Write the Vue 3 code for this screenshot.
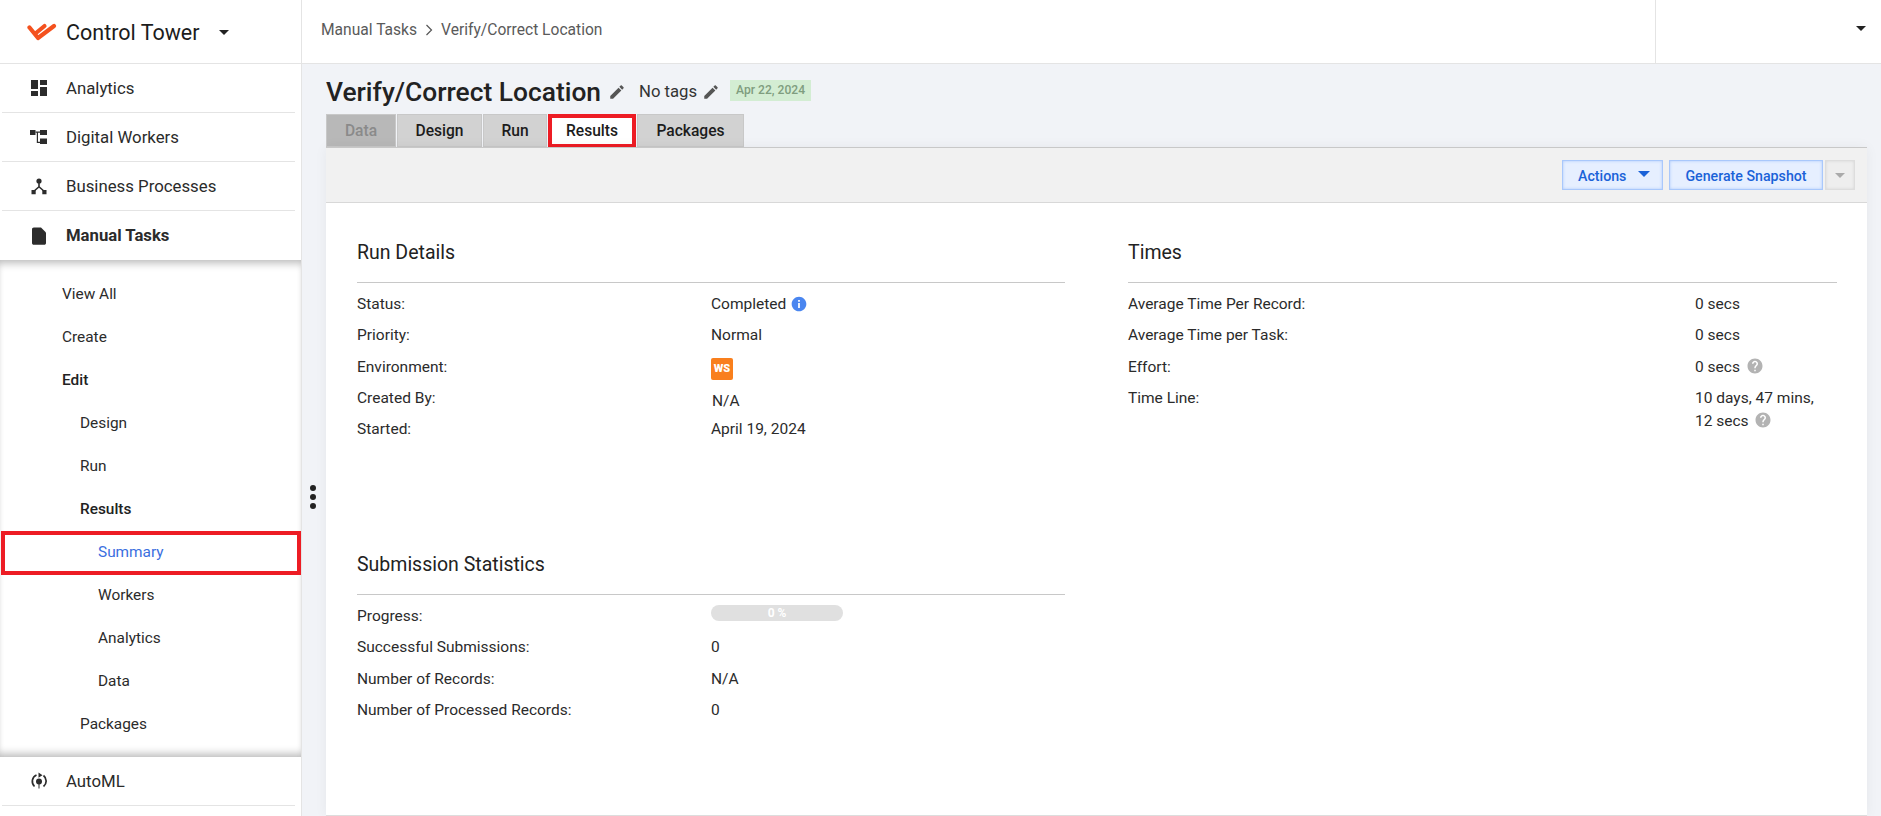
<script setup>
const navTop = [
  { label: 'Analytics', icon: 'dash' },
  { label: 'Digital Workers', icon: 'tree' },
  { label: 'Business Processes', icon: 'hub' },
]
const subItems = [
  { label: 'View All', level: 0 },
  { label: 'Create', level: 0 },
  { label: 'Edit', level: 0, bold: true },
  { label: 'Design', level: 1 },
  { label: 'Run', level: 1 },
  { label: 'Results', level: 1, bold: true },
  { label: 'Summary', level: 2, active: true },
  { label: 'Workers', level: 2 },
  { label: 'Analytics', level: 2 },
  { label: 'Data', level: 2 },
  { label: 'Packages', level: 1 },
]
const tabs = [
  { label: 'Data', cls: 'tab-data' },
  { label: 'Design', cls: 'tab-design' },
  { label: 'Run', cls: 'tab-run' },
  { label: 'Results', cls: 'tab-results' },
  { label: 'Packages', cls: 'tab-packages' },
]
const submission = [
  { k: 'Successful Submissions:', v: '0' },
  { k: 'Number of Records:', v: 'N/A' },
  { k: 'Number of Processed Records:', v: '0' },
]
const editPath = 'M3 17.25V21h3.75L17.81 9.94l-3.75-3.75L3 17.25zM20.71 7.04c.39-.39.39-1.02 0-1.41l-2.34-2.34c-.39-.39-1.02-.39-1.41 0l-1.83 1.83 3.75 3.75 1.83-1.83z'
const helpPath = 'M12 2C6.48 2 2 6.48 2 12s4.48 10 10 10 10-4.48 10-10S17.52 2 12 2zm1 17h-2v-2h2v2zm2.07-7.75l-.9.92C13.45 12.9 13 13.5 13 15h-2v-.5c0-1.1.45-2.1 1.17-2.83l1.24-1.26c.37-.36.59-.86.59-1.41 0-1.1-.9-2-2-2s-2 .9-2 2H8c0-2.21 1.79-4 4-4s4 1.79 4 4c0 .88-.36 1.68-.93 2.25z'
</script>

<template>
  <div class="page">
    <aside class="sidebar">
      <div class="brand">
        <svg class="logo" viewBox="0 0 30 18" width="30" height="18">
          <path d="M2.500 4.500 L11 15 L27 3" fill="none" stroke="#f4511e" stroke-width="4.200" stroke-linecap="round" stroke-linejoin="round" />
          <path d="M9 10 L17.500 3" fill="none" stroke="#f4511e" stroke-width="4.200" stroke-linecap="round" />
        </svg>
        <span class="brand-name">Control Tower</span>
        <span class="caret brand-caret"></span>
      </div>
      <nav>
        <div v-for="item in navTop" :key="item.label" class="nav-row">
          <svg class="nav-icon" viewBox="0 0 18 18" width="18" height="18">
            <path v-if="item.icon === 'dash'" d="M1 1h7v9H1zM1 12h7v5H1zM10 1h7v5h-7zM10 8h7v9h-7z" fill="#2c2c2c" />
            <g v-else-if="item.icon === 'tree'" fill="#2c2c2c">
              <path d="M0 2h5.500v5H0zM10 2h7v5h-7zM10 10.500h7v5.500h-7z" />
              <path d="M5.500 3.500H10v1.200H8v9H10v1.200H6.800V4.700H5.500z" />
            </g>
            <g v-else fill="#2c2c2c">
              <circle cx="9" cy="4" r="2.600" />
              <path d="M8.200 5h1.600v4.500l4 3.400-1 1.200L9 10.800l-3.800 3.300-1-1.200 4-3.400z" />
              <path d="M1.500 13h4.200v4.200H1.500zM12.300 13h4.200v4.200h-4.200z" />
            </g>
          </svg>
          <span>{{ item.label }}</span>
        </div>
        <div class="nav-row nav-bold">
          <svg class="nav-icon" viewBox="0 0 18 18" width="18" height="18">
            <path d="M3.800 0.500h7.200l5 5v10.500c0 1-.8 1.800-1.800 1.800H3.800C2.800 17.800 2 17 2 16V2.300C2 1.300 2.800 .5 3.800 .5z" fill="#2c2c2c" />
          </svg>
          <span>Manual Tasks</span>
        </div>
        <div class="submenu">
          <div
            v-for="s in subItems"
            :key="s.label + s.level"
            class="sub-row"
            :class="['lvl' + s.level, { bold: s.bold, active: s.active }]"
          >{{ s.label }}</div>
        </div>
        <div class="nav-row automl">
          <svg class="nav-icon" viewBox="0 0 18 18" width="18" height="18">
            <path d="M4.500 14.500A7 7 0 0 1 6.500 3M13.500 3.500A7 7 0 0 1 13.500 14.500" fill="none" stroke="#2c2c2c" stroke-width="1.700" />
            <path d="M8.500 0.500l4 2.700-4 2.600z" fill="#2c2c2c" />
            <circle cx="9" cy="9.500" r="3" fill="#2c2c2c" />
            <path d="M8.500 12h1v4.500h-1z" fill="#2c2c2c" />
          </svg>
          <span>AutoML</span>
        </div>
      </nav>
    </aside>

    <div class="main">
      <header class="topbar">
        <div class="crumbs">
          <span>Manual Tasks</span>
          <svg class="crumb-sep" viewBox="0 0 8 12" width="8" height="12"><path d="M1.500 1l5 5-5 5" fill="none" stroke="#555" stroke-width="1.200" /></svg>
          <span>Verify/Correct Location</span>
        </div>
        <div class="user-box"><span class="caret user-caret"></span></div>
      </header>

      <div class="content">
        <div class="title-row">
          <h1>Verify/Correct Location</h1>
          <svg class="edit" viewBox="0 0 24 24" width="18" height="18"><path :d="editPath" fill="#555" /></svg>
          <span class="tags">No tags</span>
          <svg class="edit edit-tags" viewBox="0 0 24 24" width="18" height="18"><path :d="editPath" fill="#555" /></svg>
          <span class="date-chip">Apr 22, 2024</span>
        </div>

        <div class="tabs">
          <div v-for="t in tabs" :key="t.label" class="tab" :class="t.cls">{{ t.label }}</div>
        </div>

        <section class="panel">
          <div class="toolbar">
            <button class="btn btn-actions">Actions<span class="btn-caret"></span></button>
            <button class="btn btn-snapshot">Generate Snapshot</button>
            <button class="btn-more"><span></span></button>
          </div>

          <div class="body">
            <div class="columns">
              <div class="col col-left">
                <h2>Run Details</h2>
                <div class="rows">
                  <div class="row"><span class="k">Status:</span><span class="v">Completed
                    <svg class="info" viewBox="0 0 24 24" width="16" height="16"><path d="M12 1C5.900 1 1 5.900 1 12s4.900 11 11 11 11-4.900 11-11S18.100 1 12 1zm1.300 17h-2.600v-7.500h2.600V18zm0-9.500h-2.600V6h2.600v2.500z" fill="#4a86f0" /></svg></span></div>
                  <div class="row"><span class="k">Priority:</span><span class="v">Normal</span></div>
                  <div class="row"><span class="k">Environment:</span><span class="v"><span class="ws">WS</span></span></div>
                  <div class="row row-created"><span class="k">Created By:</span><span class="v na">N/A</span></div>
                  <div class="row"><span class="k">Started:</span><span class="v">April 19, 2024</span></div>
                </div>
              </div>
              <div class="col col-right">
                <h2>Times</h2>
                <div class="rows">
                  <div class="row"><span class="k kt">Average Time Per Record:</span><span class="v">0 secs</span></div>
                  <div class="row"><span class="k kt">Average Time per Task:</span><span class="v">0 secs</span></div>
                  <div class="row"><span class="k kt">Effort:</span><span class="v">0 secs
                    <svg class="help" viewBox="0 0 24 24" width="18" height="18"><path :d="helpPath" fill="#b3b3b3" /></svg></span></div>
                  <div class="row row-tl"><span class="k kt">Time Line:</span><span class="v vt">10 days, 47 mins, 12 secs
                    <svg class="help" viewBox="0 0 24 24" width="18" height="18"><path :d="helpPath" fill="#b3b3b3" /></svg></span></div>
                </div>
              </div>
            </div>

            <div class="col col-left stats">
              <h2>Submission Statistics</h2>
              <div class="rows">
                <div class="row"><span class="k">Progress:</span><span class="v"><span class="bar">0 %</span></span></div>
                <div v-for="r in submission" :key="r.k" class="row"><span class="k">{{ r.k }}</span><span class="v">{{ r.v }}</span></div>
              </div>
            </div>
          </div>
        </section>
      </div>

      <div class="handle"><i></i><i></i><i></i></div>
    </div>
  </div>
</template>

<style>
html, body { margin: 0; height: 100%; overflow: hidden; background: #f1f3f7; }
</style>

<style scoped>
* { box-sizing: border-box; }
.page {
  display: flex;
  width: 1881px;
  height: 816px;
  overflow: hidden;
  font-family: Roboto, "Liberation Sans", sans-serif;
  font-size: 15.5px;
  color: #2b2b2b;
  background: #f1f3f7;
}
.sidebar {
  width: 302px;
  flex: none;
  height: 816px;
  background: #fff;
  border-right: 1px solid #e4e4e4;
  overflow: hidden;
}
.brand {
  height: 64px;
  display: flex;
  align-items: center;
  padding-left: 27px;
  border-bottom: 1px solid #e4e4e4;
}
.logo { flex: none; }
.brand-name {
  margin-left: 9px;
  padding-top: 2px;
  font-size: 21.5px;
  color: #1c1c1c;
  width: 153px;
  white-space: nowrap;
}
.caret {
  display: block;
  width: 0;
  height: 0;
  border-left: 5px solid transparent;
  border-right: 5px solid transparent;
  border-top: 5px solid #222;
}
.brand-caret { margin-top: 2px; }
.nav-row {
  height: 49px;
  display: flex;
  align-items: center;
  margin: 0 6px 0 2px;
  padding-left: 28px;
  border-bottom: 1px solid #e4e4e4;
  font-size: 16.8px;
  color: #2b2b2b;
}
.nav-row span { margin-left: 18px; }
.nav-icon { flex: none; }
.nav-bold { border-bottom: none; font-weight: 700; font-size: 16.7px; margin-right: 0; }
.submenu {
  height: 497px;
  padding-top: 12px;
  box-shadow: inset 0 8px 8px -5px #b8b8b8, inset 0 -8px 8px -5px #b8b8b8;
}
.sub-row {
  height: 43px;
  display: flex;
  align-items: center;
  font-size: 15.4px;
  color: #2b2b2b;
  margin: 0 0 0 2px;
}
.sub-row.lvl0 { padding-left: 60px; }
.sub-row.lvl1 { padding-left: 78px; }
.sub-row.lvl2 { padding-left: 96px; }
.sub-row.bold { font-weight: 500; color: #222; }
.sub-row.active {
  color: #3b6fe0;
  border: 4px solid #ed1c24;
  margin: 1px 0 -2px 1px;
  padding-left: 93px;
  padding-bottom: 3px;
  height: 44px;
}
.automl { margin-top: 0; }

.main {
  flex: 1;
  min-width: 0;
  position: relative;
  display: flex;
  flex-direction: column;
}
.topbar {
  height: 64px;
  flex: none;
  background: #fff;
  border-bottom: 1px solid #e4e4e4;
  display: flex;
  align-items: center;
  justify-content: space-between;
}
.crumbs {
  padding-left: 19px;
  padding-bottom: 3px;
  display: flex;
  align-items: center;
  color: #5a5a5a;
  font-size: 15.6px;
}
.crumb-sep { margin: 0 8px; }
.user-box {
  width: 226px;
  height: 63px;
  border-left: 1px solid #e4e4e4;
  position: relative;
}
.user-caret { position: absolute; top: 26px; right: 15px; }

.content {
  flex: 1;
  display: flex;
  flex-direction: column;
  padding: 0 14px 0 24px;
  min-height: 0;
}
.title-row {
  height: 50px;
  display: flex;
  align-items: center;
  padding-top: 5px;
}
h1 {
  margin: 0;
  font-size: 26.35px;
  font-weight: 500;
  color: #222;
}
.edit { margin-left: 7px; flex: none; }
.tags { margin-left: 13px; font-size: 16.7px; color: #333; }
.edit-tags { margin-left: 5px; }
.date-chip {
  margin-left: 10px;
  background: #d3edd3;
  color: #7f9d7f;
  font-size: 12.1px;
  font-weight: 500;
  height: 21px;
  line-height: 21px;
  padding: 0 6px;
  margin-bottom: 3px;
}
.tabs { display: flex; height: 33px; flex: none; }
.tab {
  height: 33px;
  display: flex;
  align-items: center;
  justify-content: center;
  background: #d2d2d2;
  border: 1px solid #c8c8c8;
  font-weight: 500;
  font-size: 15.6px;
  color: #1c1c1c;
  margin-right: 1px;
}
.tab-data { width: 70px; background: #b8b8b8; color: #8a8a8a; }
.tab-design { width: 85px; }
.tab-run { width: 64px; }
.tab-results {
  width: 88px;
  background: #fff;
  border: 4px solid #ed1c24;
  height: 34px;
}
.tab-packages { width: 107px; margin-right: 0; }
.panel {
  flex: 1;
  min-height: 0;
  width: 1541px;
  display: flex;
  flex-direction: column;
  background: #fff;
  border-bottom: 1px solid #ddd;
  box-shadow: 0 0 12px rgba(0, 0, 0, 0.05);
}
.toolbar {
  height: 56px;
  flex: none;
  background: #f1f1f1;
  border-top: 1px solid #c8c8c8;
  border-bottom: 1px solid #d8d8d8;
  display: flex;
  align-items: center;
  justify-content: flex-end;
  padding-right: 12px;
}
.btn {
  height: 30px;
  background: #e6efff;
  border: 1px solid #a9c8fb;
  box-shadow: inset 0 0 3px #a9c8fb;
  color: #1a62d8;
  font-family: inherit;
  font-size: 14.2px;
  font-weight: 500;
  padding: 1px 0 0;
}
.btn-actions {
  width: 101px;
  display: flex;
  align-items: center;
  padding-left: 15px;
  margin-right: 6px;
}
.btn-caret {
  display: block;
  margin-left: 12px;
  margin-bottom: 4px;
  width: 0;
  height: 0;
  border-left: 6px solid transparent;
  border-right: 6px solid transparent;
  border-top: 6px solid #1a62d8;
}
.btn-snapshot { width: 154px; margin-right: 2px; }
.btn-more {
  width: 30px;
  height: 30px;
  background: #eee;
  border: 1px solid #ddd;
  box-shadow: inset 0 0 3px #d4d4d4;
  display: flex;
  align-items: center;
  justify-content: center;
  padding: 0;
}
.btn-more span {
  display: block;
  width: 0;
  height: 0;
  border-left: 5px solid transparent;
  border-right: 5px solid transparent;
  border-top: 5px solid #aaa;
}
.body { padding: 33px 30px 0 31px; flex: 1; }
.columns { display: flex; gap: 63px; height: 312px; }
.col-left { width: 708px; }
.col-right { width: 709px; }
h2 {
  margin: 0;
  height: 47px;
  line-height: 33px;
  font-size: 19.5px;
  font-weight: 400;
  color: #222;
  border-bottom: 1px solid #c8c8c8;
}
.rows { padding-top: 6px; }
.row {
  display: flex;
  height: 31.3px;
  line-height: 31.3px;
}
.row-created .na { padding-top: 3px; padding-left: 1px; }
.row-tl { height: auto; }
.k { width: 354px; flex: none; }
.kt { width: 567px; }
.v { flex: 1; display: block; }
.vt { line-height: 23px; padding-top: 4px; width: 125px; flex: none; }
.info { vertical-align: -3px; margin-left: 1px; }
.help { vertical-align: -3px; margin-left: 2px; }
.ws {
  display: inline-block;
  width: 22px;
  height: 22px;
  line-height: 22px;
  text-align: center;
  background: #f97f1d;
  border-radius: 2px;
  color: #fff;
  font-size: 11px;
  font-weight: 900;
  vertical-align: 0;
}
.bar {
  display: block;
  width: 132px;
  height: 16px;
  line-height: 16px;
  margin-top: 4px;
  border-radius: 8px;
  background: #e0e0e0;
  color: #fff;
  font-size: 12px;
  font-weight: 700;
  text-align: center;
}
.handle {
  position: absolute;
  left: 8px;
  top: 485px;
  display: flex;
  flex-direction: column;
  gap: 3px;
}
.handle i {
  display: block;
  width: 6px;
  height: 6px;
  border-radius: 50%;
  background: #222;
}
</style>
